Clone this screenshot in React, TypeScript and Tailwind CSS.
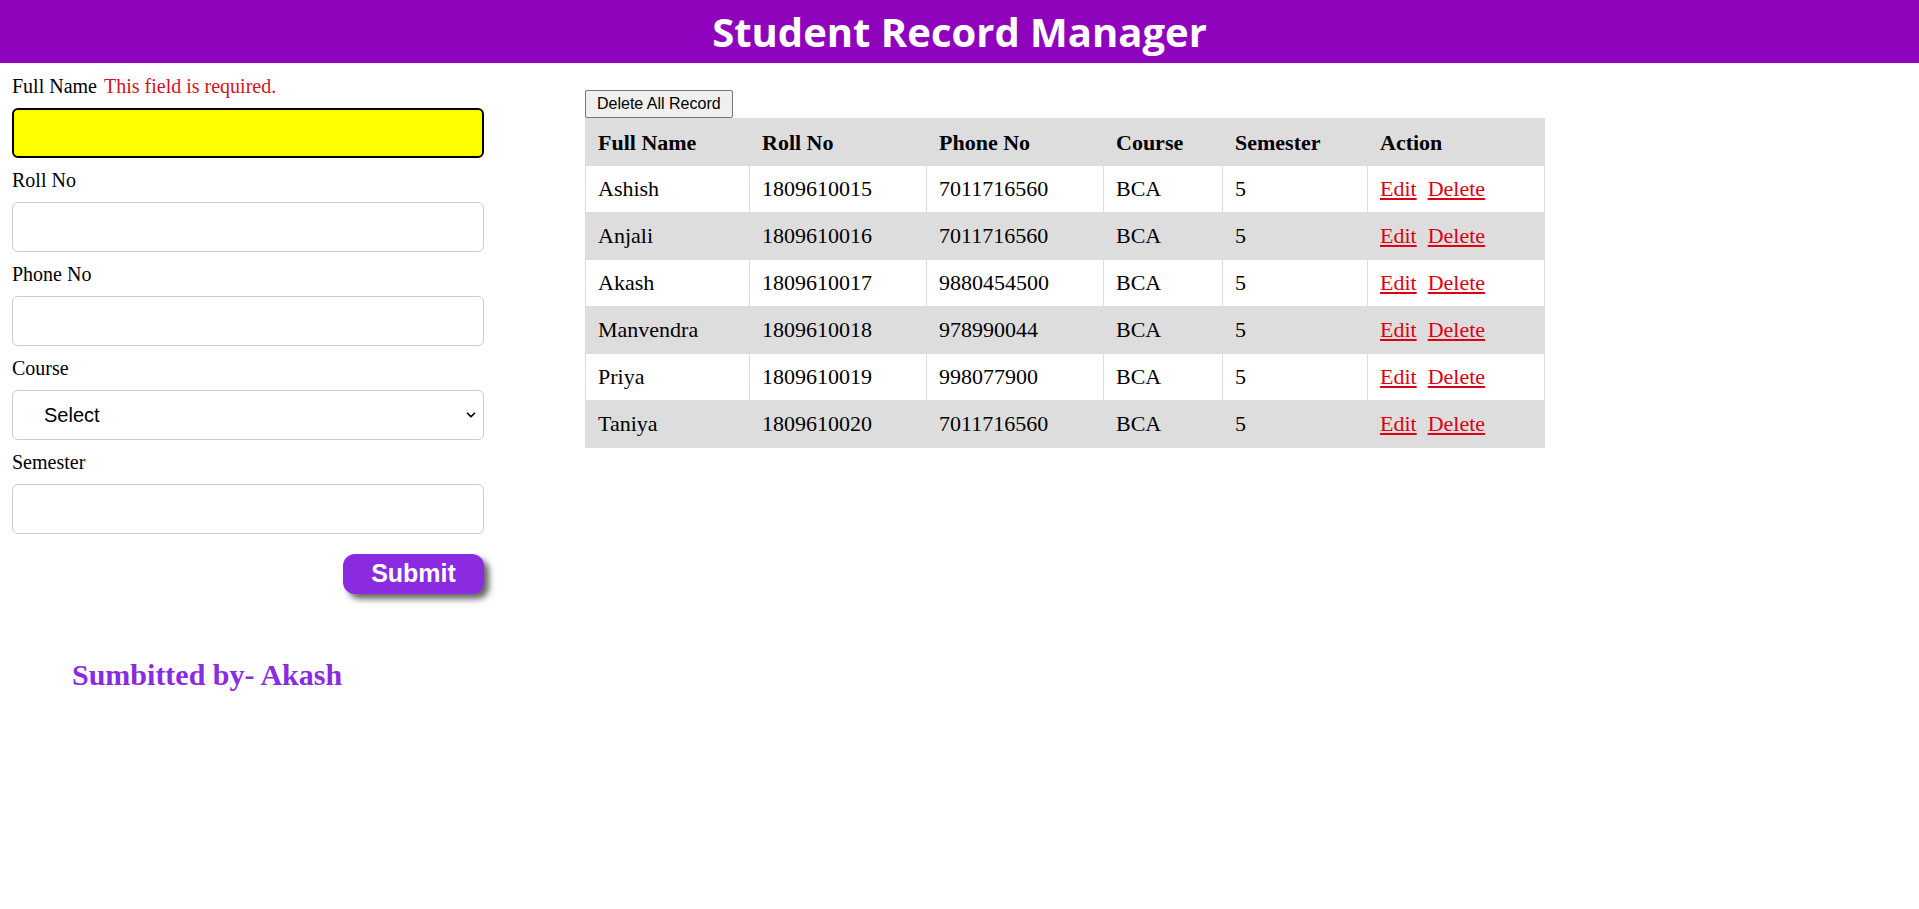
import { ChevronDown } from 'lucide-react'

type Student = {
  name: string
  roll: string
  phone: string
  course: string
  semester: string
}

const students: Student[] = [
  { name: 'Ashish', roll: '1809610015', phone: '7011716560', course: 'BCA', semester: '5' },
  { name: 'Anjali', roll: '1809610016', phone: '7011716560', course: 'BCA', semester: '5' },
  { name: 'Akash', roll: '1809610017', phone: '9880454500', course: 'BCA', semester: '5' },
  { name: 'Manvendra', roll: '1809610018', phone: '978990044', course: 'BCA', semester: '5' },
  { name: 'Priya', roll: '1809610019', phone: '998077900', course: 'BCA', semester: '5' },
  { name: 'Taniya', roll: '1809610020', phone: '7011716560', course: 'BCA', semester: '5' },
]

const serif = "font-['Liberation_Serif','Times_New_Roman',serif]"

const Field = ({ label, error }: { label: string; error?: string }) => (
  <div className="mb-[10px]">
    <div className="h-[24px] mb-[10px] text-[20px] leading-[24px] text-black">
      {label}
      {error && <span className="ml-[7px] text-[#d8101c]">{error}</span>}
    </div>
    <input
      className={`block w-full h-[50px] rounded-[6px] px-3 outline-none ${
        error ? 'bg-[#ffff00] border-2 border-black rounded-[4px]' : 'bg-white border border-[#cccccc]'
      }`}
    />
  </div>
)

const StudentForm = () => (
  <div className={`w-[496px] px-3 pt-[11px] ${serif}`}>
    <Field label="Full Name" error="This field is required." />
    <Field label="Roll No" />
    <Field label="Phone No" />
    <div className="mb-[10px]">
      <div className="h-[24px] mb-[10px] text-[20px] leading-[24px] text-black">Course</div>
      <div className="relative">
        <select className="block w-full h-[50px] appearance-none rounded-[6px] border border-[#cccccc] bg-white pl-[31px] text-[20px] text-black font-['Liberation_Sans',Arial,sans-serif] outline-none">
          <option>Select</option>
          <option>BCA</option>
          <option>MCA</option>
        </select>
        <ChevronDown className="absolute right-[6px] top-[18px] w-[14px] h-[14px] text-black" strokeWidth={3} />
      </div>
    </div>
    <Field label="Semester" />
    <div className="flex justify-end mt-[20px]">
      <button className="w-[141px] h-[40px] rounded-[12px] bg-[#8a2be2] text-white text-[25px] font-bold font-['Liberation_Sans',Arial,sans-serif] shadow-[5px_5px_6px_#666666]">
        Submit
      </button>
    </div>
    <h2 className="mt-[65px] pl-[60px] text-[30px] leading-[32px] font-bold text-[#8a2be2]">
      Sumbitted by- Akash
    </h2>
  </div>
)

const RecordTable = () => (
  <div className="ml-[89px] pt-[27px]">
    <button className="block h-[28px] px-[11px] border border-[#767676] rounded-[2px] bg-[#efefef] text-[16px] text-black font-['Liberation_Sans',Arial,sans-serif]">
      Delete All Record
    </button>
    <table className={`w-[959px] table-fixed border-collapse text-[22px] text-black ${serif}`}>
      <thead>
        <tr className="bg-[#dddddd]">
          <th className="w-[164px] h-[47px] px-3 text-left font-bold border border-[#dddddd]">Full Name</th>
          <th className="w-[177px] px-3 text-left font-bold border border-[#dddddd]">Roll No</th>
          <th className="w-[177px] px-3 text-left font-bold border border-[#dddddd]">Phone No</th>
          <th className="w-[119px] px-3 text-left font-bold border border-[#dddddd]">Course</th>
          <th className="w-[145px] px-3 text-left font-bold border border-[#dddddd]">Semester</th>
          <th className="w-[177px] px-3 text-left font-bold border border-[#dddddd]">Action</th>
        </tr>
      </thead>
      <tbody>
        {students.map((s, i) => (
          <tr key={s.roll} className={i % 2 === 1 ? 'bg-[#dddddd]' : 'bg-white'}>
            <td className="h-[47px] px-3 pb-[2px] border border-[#dddddd]">{s.name}</td>
            <td className="px-3 pb-[2px] border border-[#dddddd]">{s.roll}</td>
            <td className="px-3 pb-[2px] border border-[#dddddd]">{s.phone}</td>
            <td className="px-3 pb-[2px] border border-[#dddddd]">{s.course}</td>
            <td className="px-3 pb-[2px] border border-[#dddddd]">{s.semester}</td>
            <td className="px-3 pb-[2px] border border-[#dddddd]">
              <a href="#" className="text-[#dd0011] underline">Edit</a>
              <a href="#" className="ml-[11px] text-[#dd0011] underline">Delete</a>
            </td>
          </tr>
        ))}
      </tbody>
    </table>
  </div>
)

export default function App() {
  return (
    <div className="min-h-[909px] bg-white">
      <header className="h-[63px] bg-[#9003bd] flex items-center justify-center">
        <h1 className="text-white text-[40px] font-bold font-['Comic_Sans_MS','Open_Sans',sans-serif] leading-none">
          Student Record Manager
        </h1>
      </header>
      <div className="flex items-start">
        <StudentForm />
        <RecordTable />
      </div>
    </div>
  )
}
